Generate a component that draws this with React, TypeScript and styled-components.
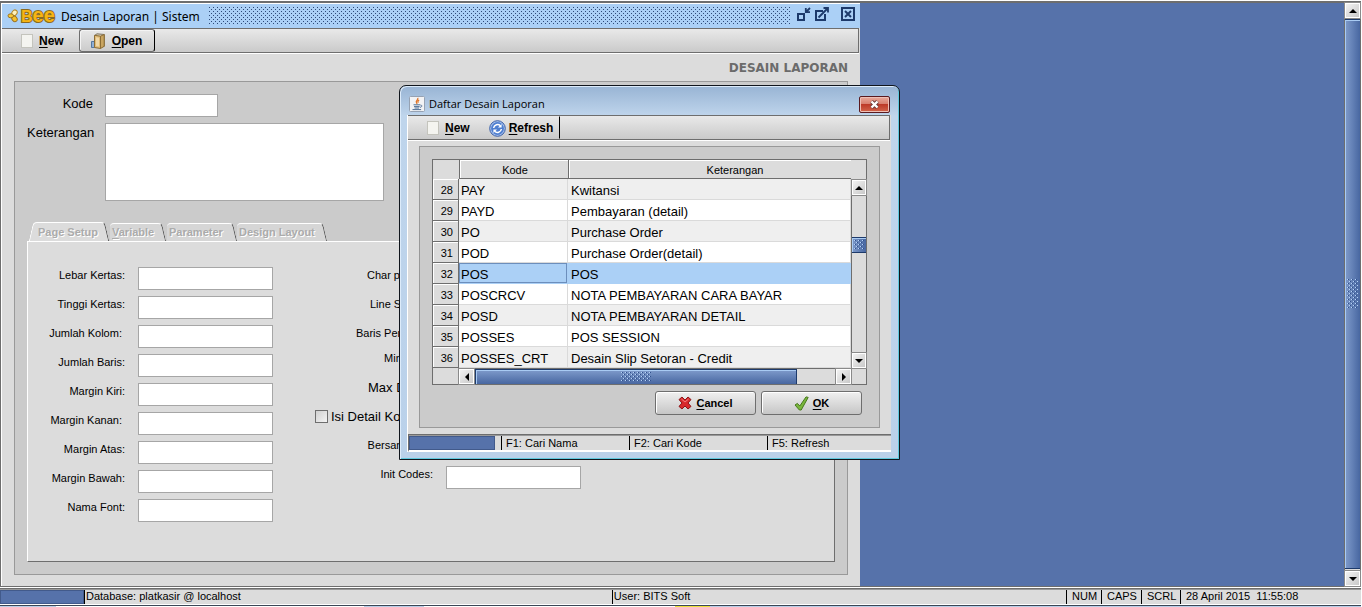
import React from "react";
import styled, { createGlobalStyle, css } from "styled-components";

const c = {
  desk: "#5672aa",
  face: "#dcdcdc",
  panel: "#cbcbcb",
  line: "#6e6e6e",
  soft: "#999999",
  sky: "#abd0f6",
  navy: "#1d3a6b",
};

const dots = (color: string, offset = 0) =>
  `conic-gradient(from 270deg at 1px 1px, ${color} 90deg, transparent 0) ${offset}px 0 / 4px 4px,
   conic-gradient(from 270deg at 1px 1px, ${color} 90deg, transparent 0) ${offset + 2}px 2px / 4px 4px`;

const Global = createGlobalStyle`
  *, *::before, *::after { box-sizing: border-box; }
  body { margin: 0; background: #fff; font: 11px "Liberation Sans", Arial, sans-serif; color: #000; }
  button, input, textarea { font: inherit; color: inherit; margin: 0; padding: 0; }
  u { text-underline-offset: 2px; }
`;

const Screen = styled.div`
  display: flex;
  flex-direction: column;
  min-height: 100vh;
  padding: 1px 1px 0 0;
  overflow: hidden;
`;

const Desktop = styled.main`
  position: relative;
  flex: 1;
  display: flex;
  justify-content: space-between;
  background: ${c.desk};
  border: solid ${c.line};
  border-width: 2px 1px 1px;
`;

/* Main window */
const Frame = styled.section`
  display: flex;
  flex-direction: column;
  width: 859px;
  background: ${c.face};
  border: solid #fff;
  border-width: 1px 0 0 1px;
`;

const TitleBar = styled.header`
  display: flex;
  align-items: center;
  height: 24px;
  padding: 0 5px;
  background: ${c.sky};
`;

const Logo = styled.span`
  display: flex;
  align-items: center;
  gap: 1px;
  width: 54px;
`;

const LogoText = styled.b`
  font: 700 16px/20px "Liberation Sans", Arial, sans-serif;
  color: #f7b512;
  -webkit-text-stroke: 2px #8a6a20;
  paint-order: stroke fill;
  span { font-size: 20px; }
`;

const TitleText = styled.h1`
  margin: 0;
  font: 400 12px/22px "Noto Sans", sans-serif;
  padding-top: 2px;
  white-space: nowrap;
`;

const TitleDots = styled.div`
  flex: 1;
  height: 18px;
  margin: 0 6px 0 9px;
  background: ${dots("#2f4a78")};
`;

const TitleButton = styled.button<{ $gap?: number }>`
  display: flex;
  margin: 0 0 4px ${(p) => p.$gap ?? 0}px;
  border: 0;
  background: none;
`;

const Toolbar = styled.div`
  display: flex;
  align-items: stretch;
  height: 25px;
  padding-left: 8px;
  background: linear-gradient(#e9e9e9, #cacaca);
  border: solid ${c.line};
  border-width: 1px 1px 1px 0;
  box-shadow: 0 1px #fff;
  margin: 0 1px 1px 0;
`;

const ToolButton = styled.button<{ $framed?: boolean; $last?: boolean; $tight?: boolean }>`
  display: flex;
  align-items: center;
  gap: 6px;
  padding: ${(p) => (p.$tight ? "1px 6px 0 5px" : "1px 12px 0 10px")};
  font-weight: 700;
  font-size: 12px;
  background: none;
  border: 1px solid transparent;
  ${(p) => p.$framed && css`
    margin-left: 2px;
    border-color: ${c.line};
    border-radius: 3px;
    box-shadow: inset 1px 1px #f4f4f4;
  `}
  ${(p) => p.$last && css`border-right: 1px solid #000;`}
  ${(p) => p.$tight && css`gap: 3px;`}
`;

const Body = styled.div`
  flex: 1;
  display: flex;
  flex-direction: column;
  padding: 0 12px 11px;
`;

const Heading = styled.h2`
  margin: 0;
  padding-top: 2px;
  font: 700 12px/25px "DejaVu Sans", sans-serif;
  color: #6b6b6b;
  text-align: right;
`;

const Panel = styled.div`
  flex: 1;
  display: flex;
  flex-direction: column;
  padding: 12px;
  background: ${c.panel};
  border: 1px solid ${c.soft};
`;

const HeadForm = styled.div`
  display: grid;
  grid-template-columns: 66px auto;
  justify-content: start;
  gap: 6px 12px;
  margin-bottom: 21px;
  font-size: 13px;
  line-height: 20px;
  text-align: right;
`;

const Input = styled.input<{ $w: number }>`
  width: ${(p) => p.$w}px;
  height: 23px;
  border: 1px solid #a6a6a6;
  background: #fff;
`;

const Area = styled.textarea`
  width: 279px;
  height: 78px;
  border: 1px solid #a6a6a6;
  background: #fff;
  resize: none;
`;

const Tabs = styled.div`
  display: flex;
  padding-left: 4px;
`;

const Tab = styled.button<{ $w: number; $active?: boolean }>`
  position: relative;
  isolation: isolate;
  width: ${(p) => p.$w}px;
  height: 19px;
  padding: 1px 0 0 ${(p) => (p.$active ? 7 : 2)}px;
  border: 0;
  background: none;
  color: #ababab;
  text-align: left;
  text-shadow: 1px 1px #fff;
  font-weight: 700;
  white-space: nowrap;
  &::before, &::after {
    content: "";
    position: absolute;
    z-index: -1;
    top: ${(p) => (p.$active ? 0 : 1)}px;
    bottom: 0;
    background: ${(p) => (p.$active ? c.face : "#d6d6d6")};
    border-top: 1px solid #fff;
  }
  &::before {
    left: 0;
    right: 50%;
    border-top-left-radius: 4px;
    ${(p) => p.$active && css`border-left: 1px solid #fff; transform: skewX(-13deg);`}
  }
  &::after {
    left: 45%;
    right: 3px;
    border-right: 1px solid #555;
    border-top-right-radius: 4px;
    transform: skewX(13deg);
  }
`;

const TabPanel = styled.div`
  flex: 1;
  display: flex;
  gap: 42px;
  padding: 25px 0 39px;
  background: ${c.face};
  border: 1px solid ${c.line};
  border-top-color: #fff;
  border-left-color: #fff;
`;

const Column = styled.div<{ $gap?: number }>`
  display: flex;
  flex-direction: column;
  gap: ${(p) => p.$gap ?? 6}px;
`;

const Field = styled.div<{ $label: number; $big?: boolean }>`
  display: grid;
  grid-template-columns: ${(p) => p.$label}px 135px;
  gap: 13px;
  height: 23px;
  line-height: 17px;
  text-align: right;
  white-space: pre;
  font-size: ${(p) => (p.$big ? 13 : 11)}px;
`;

const CheckField = styled.label`
  display: flex;
  gap: 3px;
  height: 23px;
  font-size: 13px;
  line-height: 17px;
`;

const Check = styled.input`
  appearance: none;
  width: 13px;
  height: 13px;
  margin-top: 2px;
  border: 1px solid ${c.line};
  background: linear-gradient(135deg, #d0d0d0, #f4f4f4);
`;

/* Scrollbars */
const Scroll = styled.div<{ $across?: boolean }>`
  display: flex;
  flex: 1;
  flex-direction: ${(p) => (p.$across ? "row" : "column")};
  background: ${c.face};
  ${(p) => (p.$across ? "border-top" : "border-left")}: 1px solid ${c.line};
`;

const Arrow = styled.button`
  flex: 0 0 15px;
  display: flex;
  align-items: center;
  justify-content: center;
  background: linear-gradient(135deg, #f2f2f2, #c9c9c9);
  border: 1px solid #fff;
  outline: 1px solid #8a8a8a;
`;

const Thumb = styled.div<{ $across?: boolean; $size?: number }>`
  flex: ${(p) => (p.$size ? `0 0 ${p.$size}px` : "1")};
  display: flex;
  align-items: center;
  justify-content: center;
  border: solid ${c.navy};
  border-width: ${(p) => (p.$across ? "1px 1px 0" : "1px 0")};
  box-shadow: inset 1px 1px #a9cbf3;
  background: linear-gradient(${(p) => (p.$across ? "180deg" : "90deg")}, #7f9bcb, #4867a1);
`;

const Grip = styled.div<{ $w: number; $h: number }>`
  width: ${(p) => p.$w}px;
  height: ${(p) => p.$h}px;
  background: ${dots("#b5d3f7")}, ${dots("#2f4f8c", 1)};
`;

const Gap = styled.div<{ $size?: number }>`
  flex: ${(p) => (p.$size ? `0 0 ${p.$size}px` : "1")};
`;

const DeskScroll = styled.aside`
  display: flex;
  width: 16px;
`;

/* Dialog */
const Dialog = styled.section`
  position: absolute;
  left: 398px;
  top: 82px;
  width: 501px;
  padding: 0 8px 7px 7px;
  border: 1px solid #10151c;
  border-radius: 7px 7px 0 0;
  background: linear-gradient(#98b4d4, #bfd5ec 30px, #bad1ea);
  box-shadow: inset 1px 1px #dcebfa, inset -1px -1px #5fc8de;
`;

const DialogTitle = styled.header`
  display: flex;
  align-items: center;
  gap: 4px;
  height: 29px;
  padding: 7px 1px 0 2px;
`;

const DialogName = styled.h2`
  flex: 1;
  margin: 0;
  font: 400 11px/16px "Open Sans", sans-serif;
`;

const CloseButton = styled.button`
  display: flex;
  align-items: center;
  justify-content: center;
  width: 31px;
  height: 17px;
  border: 1px solid #5a1a1f;
  border-radius: 2px;
  background: linear-gradient(#e9aa9c, #d8806f 45%, #bd3a28 50%, #d2654c);
  box-shadow: inset 0 0 0 1px #eec0b6;
`;

const DialogBody = styled.div`
  background: ${c.face};
  border-left: 1px solid #fff;
`;

const DialogPanel = styled.div`
  margin: 6px 11px 6px;
  padding: 12px 12px 12px;
  background: ${c.panel};
  border: 1px solid ${c.soft};
`;

const TableFrame = styled.div`
  display: grid;
  grid-template-columns: 1fr 15px;
  border: 1px solid ${c.line};
  background: ${c.face};
`;

const Table = styled.table`
  width: 100%;
  border-collapse: separate;
  border-spacing: 0;
  table-layout: fixed;
`;

const Col = styled.col<{ $w?: number }>`
  width: ${(p) => (p.$w ? `${p.$w}px` : "auto")};
`;

const HeadCell = styled.th<{ $blank?: boolean; $indent?: number }>`
  height: 19px;
  padding: 1px 0 0 ${(p) => p.$indent ?? 2}px;
  font-weight: 400;
  background: ${c.face};
  border: solid ${c.line};
  border-width: 0 0 1px 1px;
  box-shadow: inset 1px 1px #fff;
  ${(p) => p.$blank && css`border: 0; box-shadow: none;`}
`;

const RowHead = styled.th`
  height: 21px;
  padding: 2px 5px 0 0;
  font-weight: 400;
  text-align: right;
  background: ${c.face};
  border: solid ${c.line};
  border-width: 0 1px 1px 0;
  box-shadow: inset 1px 1px #fff;
`;

const Cell = styled.td<{ $selected?: boolean; $odd?: boolean; $code?: boolean }>`
  height: 21px;
  padding: 3px 0 0 ${(p) => (p.$code ? 2 : 3)}px;
  font-size: 13px;
  line-height: 17px;
  white-space: nowrap;
  background: ${(p) => (p.$selected ? c.sky : p.$odd ? "#fff" : "#efefef")};
  border: solid ${(p) => (p.$selected ? c.sky : "#dadada")};
  border-width: 0 1px 1px 0;
  ${(p) => p.$code && p.$selected && css`box-shadow: inset 0 0 0 1px #6c8ebc;`}
`;

const ScrollSide = styled.div`
  display: flex;
  flex-direction: column;
`;

const ScrollBottom = styled.div`
  display: flex;
  height: 16px;
`;

const Actions = styled.div`
  display: flex;
  justify-content: flex-end;
  gap: 5px;
  margin: 6px 5px 0 0;
`;

const Action = styled.button`
  display: flex;
  align-items: center;
  justify-content: center;
  gap: 4px;
  width: 101px;
  height: 24px;
  font-weight: 700;
  border: 1px solid ${c.line};
  border-radius: 3px;
  background: linear-gradient(#f0f0f0, #c6c6c6);
  box-shadow: inset 1px 1px #fff;
`;

/* Status bars */
const Status = styled.footer<{ $inner?: boolean }>`
  display: flex;
  height: ${(p) => (p.$inner ? 18 : 17)}px;
  padding-top: 1px;
  background: ${c.face};
  border-top: 1px solid ${c.line};
  box-shadow: inset 0 1px #999;
  ${(p) => p.$inner
    ? css`
      line-height: 14px;
      border-left: 1px solid ${c.line};
      border-bottom: 2px solid #fff;
    `
    : css`
      margin-top: 1px;
      line-height: 13px;
      border-bottom: 1px solid #fff;
    `}
`;

const StatusCell = styled.div<{ $w?: number; $grow?: number; $pad?: number }>`
  flex: ${(p) => (p.$grow ? `${p.$grow} 1 0` : `0 0 ${p.$w}px`)};
  padding-left: ${(p) => p.$pad ?? 5}px;
  border-left: 1px solid #000;
  white-space: pre;
  overflow: hidden;
`;

const Progress = styled.div<{ $w: number; $inner?: boolean }>`
  flex: 0 0 ${(p) => p.$w}px;
  background: ${c.desk};
  border: 1px solid #425a8b;
  ${(p) => p.$inner && css`margin-right: 6px;`}
`;

const Taskbar = styled.div`
  height: 3px;
  border-top: 1px solid #3c4756;
  background: linear-gradient(90deg, #b9cfe8 56px, #fff 56px, #fff 364px, #b9cfe8 364px, #b9cfe8 424px, #fff 424px, #fff 675px, #ece23a 675px, #ece23a 710px, #b9cfe8 710px);
`;

const PageIcon = () => (
  <svg width="12" height="14" viewBox="0 0 12 14" aria-hidden="true">
    <rect x=".5" y=".5" width="11" height="13" fill="#f4f4f0" stroke="#c4c4bd" />
  </svg>
);

const DoorIcon = () => (
  <svg width="16" height="16" viewBox="0 0 16 16" aria-hidden="true">
    <path d="M1.5 8.5h4v6h-4z" fill="#8fb0d8" stroke="#55779f" />
    <path d="M4.5 2.5 7 .8l7.3.7v11.8L11 14" fill="#d9cdb0" stroke="#7d7463" />
    <path d="M4.5 2.3 10.5 3.2v12.3l-6-1z" fill="#e0bb78" stroke="#8c6d35" />
    <path d="M10.5 3.2 14.2 1.5v11.8l-3.7 2.2z" fill="#c9a561" stroke="#8c6d35" />
    <path d="M6 4.2 9 4.8v8.8l-3-.6z" fill="#f1d9a8" />
  </svg>
);

const BeeIcon = () => (
  <svg width="13" height="14" viewBox="0 0 13 14" aria-hidden="true">
    <ellipse cx="7.5" cy="3.8" rx="3" ry="2.4" transform="rotate(-50 7.5 3.8)" fill="#fff2bd" stroke="#b5892a" />
    <ellipse cx="7.5" cy="9.8" rx="3" ry="2.4" transform="rotate(50 7.5 9.8)" fill="#f7c12a" stroke="#9b7321" />
    <ellipse cx="3.8" cy="6.8" rx="2.8" ry="2" fill="#f9c934" stroke="#9b7321" />
  </svg>
);

const RestoreIcon = () => (
  <svg width="14" height="14" viewBox="0 0 14 14" fill="none" stroke={c.navy} strokeWidth="2" aria-hidden="true">
    <path d="M1 7h6v6H1z" />
    <path d="M13 1 9 5M8.8 1v4.2H13" strokeWidth="1.8" />
  </svg>
);

const MaximizeIcon = () => (
  <svg width="14" height="14" viewBox="0 0 14 14" fill="none" stroke={c.navy} strokeWidth="2" aria-hidden="true">
    <path d="M8 4H1v9h9V7" />
    <path d="M3.5 10.5 12 2M8.5 1H13v4.5" strokeWidth="1.8" />
  </svg>
);

const CloseIcon = () => (
  <svg width="14" height="14" viewBox="0 0 14 14" fill="none" stroke={c.navy} aria-hidden="true">
    <path d="M1 1h12v12H1z" strokeWidth="2" />
    <path d="m4 4 6 6m0-6-6 6" strokeWidth="2" />
  </svg>
);

const RefreshIcon = () => (
  <svg width="17" height="17" viewBox="0 0 17 17" aria-hidden="true">
    <circle cx="8.5" cy="8.5" r="7.8" fill="#a9c3ee" stroke="#3a5fa8" />
    <circle cx="8.5" cy="8.5" r="6.4" fill="#4f7fd0" />
    <path d="M4.6 8a4 4 0 0 1 6.8-2.2M12.4 9a4 4 0 0 1-6.8 2.2" fill="none" stroke="#fff" strokeWidth="1.5" />
    <path d="M12.6 4v3.6H9zM4.4 13V9.4H8z" fill="#fff" />
  </svg>
);

const JavaIcon = () => (
  <svg width="16" height="16" viewBox="0 0 16 16" aria-hidden="true">
    <rect x=".5" y=".5" width="15" height="15" rx="1" fill="#f2f3f5" stroke="#96a2b3" />
    <path d="M8.7 1.8c1.2 2-2.6 2.8-1.2 4.8.5.7.6 1 .3 1.5M10.2 4c-2 1-1.3 1.8-.8 2.6" fill="none" stroke="#e0762a" strokeWidth="1.3" />
    <path d="M4.5 8.8h6.8M5 10.6h5.6M5.6 12h4.4M3.5 13.6h8.6M11.5 9.2c2-.2 1.8 1.8-.6 2.2" fill="none" stroke="#4f6f95" />
  </svg>
);

const CrossIcon = () => (
  <svg width="14" height="14" viewBox="0 0 14 14" aria-hidden="true">
    <path d="M4 1 7 4l3-3 3 2.6L10 7l3 3.4L10 13l-3-3-3 3-3-2.6L4 7 1 3.6z" fill="#d8292c" stroke="#8e1518" strokeLinejoin="round" />
    <path d="M3.4 3 7 6l3.6-3" fill="none" stroke="#f08080" />
  </svg>
);

const TickIcon = () => (
  <svg width="15" height="15" viewBox="0 0 15 15" aria-hidden="true">
    <path d="M1 9 3.4 7.4 5.8 10 12 .9l2.2.5L7.2 14H5.4z" fill="#79b63c" stroke="#47791d" strokeLinejoin="round" />
  </svg>
);

const WhiteCross = () => (
  <svg width="11" height="9" viewBox="0 0 11 9" aria-hidden="true">
    <path d="m2.5 1.5 6 6m0-6-6 6" stroke="#6b3b3b" strokeWidth="4" />
    <path d="m2.5 1.5 6 6m0-6-6 6" stroke="#fff" strokeWidth="2.4" />
  </svg>
);

const heads = { up: "M0 6 4 2l4 4z", down: "M0 2l4 4 4-4z", left: "M6 0 2 4l4 4z", right: "M2 0l4 4-4 4z" };

const ArrowButton = ({ to }: { to: keyof typeof heads }) => (
  <Arrow type="button" aria-label={`Scroll ${to}`}>
    <svg width="8" height="8" viewBox="0 0 8 8" aria-hidden="true"><path d={heads[to]} /></svg>
  </Arrow>
);

const leftFields = ["Lebar Kertas:", "Tinggi Kertas:", "Jumlah Kolom: ", "Jumlah Baris:", "Margin Kiri:", "Margin Kanan: ", "Margin Atas:", "Margin Bawah:", "Nama Font:"];
const printFields = ["Char per Inci:", "Line Scaling:", "Baris Per Page:"];
const lowerFields = ["Bersambung:", "Init Codes:"];

const LabeledInput = ({ text, width, big }: { text: string; width: number; big?: boolean }) => {
  const id = text.trim().replace(/\W/g, "");
  return (
    <Field $label={width} $big={big}>
      <label htmlFor={id}>{text}</label>
      <Input id={id} $w={135} />
    </Field>
  );
};

const rows: [number, string, string][] = [
  [28, "PAY", "Kwitansi"],
  [29, "PAYD", "Pembayaran (detail)"],
  [30, "PO", "Purchase Order"],
  [31, "POD", "Purchase Order(detail)"],
  [32, "POS", "POS"],
  [33, "POSCRCV", "NOTA PEMBAYARAN CARA BAYAR"],
  [34, "POSD", "NOTA PEMBAYARAN DETAIL"],
  [35, "POSSES", "POS SESSION"],
  [36, "POSSES_CRT", "Desain Slip Setoran - Credit"],
];

export default function App() {
  return (
    <Screen>
      <Global />
      <Desktop>
        <Frame>
          <TitleBar>
            <Logo><BeeIcon /><LogoText>B<span>ee</span></LogoText></Logo>
            <TitleText>Desain Laporan | Sistem</TitleText>
            <TitleDots />
            <TitleButton type="button" aria-label="Restore"><RestoreIcon /></TitleButton>
            <TitleButton type="button" aria-label="Maximize" $gap={4}><MaximizeIcon /></TitleButton>
            <TitleButton type="button" aria-label="Close" $gap={12}><CloseIcon /></TitleButton>
          </TitleBar>
          <Toolbar>
            <ToolButton type="button"><PageIcon /><span><u>N</u>ew</span></ToolButton>
            <ToolButton type="button" $framed $last><DoorIcon /><span><u>O</u>pen</span></ToolButton>
          </Toolbar>
          <Body>
            <Heading>DESAIN LAPORAN</Heading>
            <Panel>
              <HeadForm>
                <label htmlFor="kode">Kode</label>
                <Input id="kode" $w={113} />
                <label htmlFor="keterangan">Keterangan</label>
                <Area id="keterangan" />
              </HeadForm>
              <Tabs role="tablist">
                <Tab type="button" role="tab" $w={79} $active>Page Setup</Tab>
                <Tab type="button" role="tab" $w={57}><u>V</u>ariable</Tab>
                <Tab type="button" role="tab" $w={70}>Parameter</Tab>
                <Tab type="button" role="tab" $w={90}>Design Layout</Tab>
              </Tabs>
              <TabPanel role="tabpanel">
                <Column>
                  {leftFields.map((f) => <LabeledInput key={f} text={f} width={97} />)}
                </Column>
                <Column $gap={2}>
                  <Column>
                    {printFields.map((f) => <LabeledInput key={f} text={f} width={118} />)}
                  </Column>
                  <Column>
                    <LabeledInput text="Min Baris:" width={118} />
                    <LabeledInput text="Max Detail:" width={118} big />
                    <CheckField><Check type="checkbox" />Isi Detail Kosong</CheckField>
                    {lowerFields.map((f) => <LabeledInput key={f} text={f} width={118} />)}
                  </Column>
                </Column>
              </TabPanel>
            </Panel>
          </Body>
        </Frame>
        <DeskScroll>
          <Scroll>
            <ArrowButton to="up" />
            <Gap $size={1} />
            <Thumb><Grip $w={11} $h={30} /></Thumb>
            <Gap $size={2} />
            <ArrowButton to="down" />
          </Scroll>
        </DeskScroll>

        <Dialog role="dialog" aria-label="Daftar Desain Laporan">
          <DialogTitle>
            <JavaIcon />
            <DialogName>Daftar Desain Laporan</DialogName>
            <CloseButton type="button" aria-label="Close"><WhiteCross /></CloseButton>
          </DialogTitle>
          <DialogBody>
            <Toolbar>
              <ToolButton type="button"><PageIcon /><span><u>N</u>ew</span></ToolButton>
              <ToolButton type="button" $last $tight><RefreshIcon /><span><u>R</u>efresh</span></ToolButton>
            </Toolbar>
            <DialogPanel>
              <TableFrame>
                <Table>
                  <colgroup><Col $w={26} /><Col $w={109} /><Col /></colgroup>
                  <thead>
                    <tr>
                      <HeadCell $blank as="td" />
                      <HeadCell scope="col">Kode</HeadCell>
                      <HeadCell scope="col" $indent={50}>Keterangan</HeadCell>
                    </tr>
                  </thead>
                  <tbody>
                    {rows.map(([n, kode, ket]) => {
                      const state = { $selected: n === 32, $odd: n % 2 === 1 };
                      return (
                        <tr key={n}>
                          <RowHead scope="row">{n}</RowHead>
                          <Cell {...state} $code>{kode}</Cell>
                          <Cell {...state}>{ket}</Cell>
                        </tr>
                      );
                    })}
                  </tbody>
                </Table>
                <ScrollSide>
                  <Gap $size={20} />
                  <Scroll>
                    <ArrowButton to="up" />
                    <Gap $size={42} />
                    <Thumb $size={16}><Grip $w={10} $h={10} /></Thumb>
                    <Gap />
                    <ArrowButton to="down" />
                  </Scroll>
                </ScrollSide>
                <ScrollBottom>
                  <Gap $size={26} />
                  <Scroll $across>
                    <ArrowButton to="left" />
                    <Gap $size={1} />
                    <Thumb $across $size={322}><Grip $w={30} $h={10} /></Thumb>
                    <Gap />
                    <ArrowButton to="right" />
                  </Scroll>
                </ScrollBottom>
              </TableFrame>
              <Actions>
                <Action type="button"><CrossIcon /><span><u>C</u>ancel</span></Action>
                <Action type="button"><TickIcon /><span><u>O</u>K</span></Action>
              </Actions>
            </DialogPanel>
            <Status $inner>
              <Progress $w={86} $inner />
              <StatusCell $w={128} $pad={4}>F1: Cari Nama</StatusCell>
              <StatusCell $w={138} $pad={4}>F2: Cari Kode</StatusCell>
              <StatusCell $grow={1} $pad={4}>F5: Refresh</StatusCell>
            </Status>
          </DialogBody>
        </Dialog>
      </Desktop>
      <Status>
        <Progress $w={84} />
        <StatusCell $grow={528} $pad={1}>Database: platkasir @ localhost</StatusCell>
        <StatusCell $grow={454} $pad={1}>User: BITS Soft</StatusCell>
        <StatusCell $w={35}>NUM</StatusCell>
        <StatusCell $w={40}>CAPS</StatusCell>
        <StatusCell $w={39}>SCRL</StatusCell>
        <StatusCell $w={181}>28 April 2015  11:55:08</StatusCell>
      </Status>
      <Taskbar />
    </Screen>
  );
}
